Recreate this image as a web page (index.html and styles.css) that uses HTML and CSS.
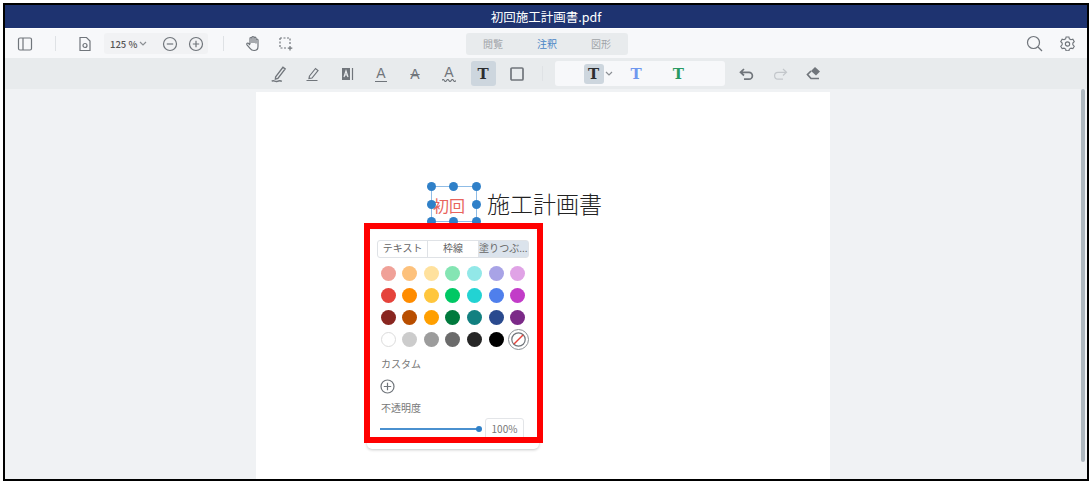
FILE: index.html
```html
<!DOCTYPE html>
<html lang="ja">
<head>
    <meta charset="UTF-8">
    <title>初回施工計画書.pdf</title>
    <link rel="stylesheet" href="styles.css">
</head>
<body>

<div class="frame">
    <div class="title-bar">初回施工計画書.pdf</div>

    <div class="main-bar">
        <button class="icon-btn first">
            <svg width="16" height="16" viewBox="0 0 16 16"><rect x="1.5" y="2" width="13" height="12" rx="1.5"/><path d="M6 2v12"/></svg>
        </button>
        <span class="bar-line line-a"></span>
        <button class="icon-btn doc-btn">
            <svg width="14" height="16" viewBox="0 0 14 16"><path d="M2 1.5h6.5l3.5 3.5v9.5H2z"/><circle cx="7" cy="9.5" r="2"/></svg>
        </button>
        <div class="zoom-group">
            <span class="zoom-val">125 %</span>
            <svg class="chev" width="8" height="5" viewBox="0 0 8 5"><path d="M1 1l3 3 3-3"/></svg>
            <svg class="zoom-out" width="16" height="16" viewBox="0 0 16 16"><circle cx="8" cy="8" r="6.5"/><path d="M4.8 8h6.4"/></svg>
            <svg class="zoom-in" width="16" height="16" viewBox="0 0 16 16"><circle cx="8" cy="8" r="6.5"/><path d="M4.8 8h6.4M8 4.8v6.4"/></svg>
        </div>
        <span class="bar-line line-b"></span>
        <button class="icon-btn hand-btn">
            <svg width="16" height="17" viewBox="0 0 16 17"><path d="M5 9V3.5a1 1 0 0 1 2 0V8M7 8V2.5a1 1 0 0 1 2 0V8M9 8V3.2a1 1 0 0 1 2 0V8.500M11 8V5a1 1 0 0 1 2 0v6.500c0 2.500-1.800 4-4 4-2 0-3-.8-4-2.200L2 9.800c-.9-1.300.8-2.300 1.700-1.300L5 10"/></svg>
        </button>
        <button class="icon-btn crop-btn">
            <svg width="14" height="14" viewBox="0 0 14 14"><path stroke-dasharray="2 1.500" d="M1 1h10v6.500M1 1v10h6.500"/><path d="M11 9v4.500M8.800 11.200h4.500"/></svg>
        </button>
        <div class="mode-tabs">
            <span>閲覧</span>
            <span class="mode-on">注釈</span>
            <span>図形</span>
        </div>
        <button class="icon-btn search-btn">
            <svg width="17" height="17" viewBox="0 0 17 17"><circle cx="7.500" cy="7.500" r="6"/><path d="M12 12l4 4"/></svg>
        </button>
        <button class="icon-btn gear-btn">
            <svg width="15" height="15" viewBox="0 0 16 16"><path d="M6.500 1h3l.5 2 1.700 1 2-.6 1.500 2.600-1.500 1.500v1.900l1.500 1.500-1.500 2.600-2-.6-1.700 1-.5 2h-3l-.5-2-1.700-1-2 .6L.8 10.900l1.500-1.500V7.500L.8 6l1.500-2.600 2 .6 1.700-1z"/><circle cx="8" cy="8.500" r="2.300"/></svg>
        </button>
    </div>

    <div class="tool-bar">
        <button class="tool">
            <svg width="18" height="18" viewBox="0 0 16 16"><path d="M5 10.500l6.500-8.500 2 1.500L7 12l-2.200.6zM1.500 14.500c2-1.500 3 .8 5 0 1.500-.6 3-.6 4 0"/></svg>
        </button>
        <button class="tool">
            <svg width="16" height="16" viewBox="0 0 16 16"><path d="M4.500 10l6-7.500 2.500 2L7 12l-3 .6zM1.500 14.500h11"/></svg>
        </button>
        <button class="tool">
            <svg width="13" height="14" viewBox="0 0 13 14"><rect class="solid" x="1" y="1" width="8" height="12"/><path class="cut" d="M3 10l2-6 2 6M3.800 8h2.400"/><path d="M11.500 1v12"/></svg>
        </button>
        <button class="tool"><span class="glyph-a under">A</span></button>
        <button class="tool"><span class="glyph-a strike">A</span></button>
        <button class="tool wave-tool">
            <span class="glyph-a">A</span>
            <svg width="14" height="3" viewBox="0 0 14 3"><path d="M0 1.500q1.200-2 2.300 0t2.300 0 2.300 0 2.300 0 2.300 0 2.300 0"/></svg>
        </button>
        <button class="tool tool-on"><span class="glyph-t">T</span></button>
        <button class="tool">
            <svg width="14" height="14" viewBox="0 0 14 14"><rect x="1" y="1" width="12" height="12" rx="1" class="thick"/></svg>
        </button>
        <span class="bar-line line-c"></span>
        <div class="style-group">
            <span class="style-t style-on"><span class="glyph-t">T</span></span>
            <svg class="chev" width="8" height="5" viewBox="0 0 8 5"><path d="M1 1l3 3 3-3"/></svg>
            <span class="glyph-t blue-t">T</span>
            <span class="glyph-t green-t">T</span>
        </div>
        <button class="tool undo-btn">
            <svg width="15" height="12" viewBox="0 0 15 12"><path d="M5 1L1.500 4.300 5 7.500M1.500 4.300H10a3.400 3.400 0 0 1 0 6.800H5" class="thick"/></svg>
        </button>
        <button class="tool redo-btn">
            <svg width="15" height="12" viewBox="0 0 15 12"><path d="M10 1l3.500 3.300L10 7.500M13.500 4.300H5a3.400 3.400 0 0 0 0 6.800h5"/></svg>
        </button>
        <button class="tool">
            <svg width="16" height="15" viewBox="0 0 16 15"><path class="solid" d="M9 1l5 4.500-4 4-5-4.500z"/><path class="thick" d="M5 5L1.500 8.500 5 12.500h8"/></svg>
        </button>
    </div>

    <div class="viewer">
        <div class="pdf-page">
            <div class="doc-line">
                <div class="sel-box">
                    初回
                    <i class="dot d1"></i><i class="dot d2"></i><i class="dot d3"></i>
                    <i class="dot d4"></i><i class="dot d5"></i>
                    <i class="dot d6"></i><i class="dot d7"></i><i class="dot d8"></i>
                </div>
                <span class="doc-text">施工計画書</span>
            </div>

            <div class="color-pop">
                <div class="pop-tabs">
                    <span>テキスト</span>
                    <span>枠線</span>
                    <span class="pop-on">塗りつぶ...</span>
                </div>
                <div class="swatches">
                    <i class="sw" style="background:#f0a198"></i>
                    <i class="sw" style="background:#fdc17c"></i>
                    <i class="sw" style="background:#ffe19d"></i>
                    <i class="sw" style="background:#84e5b3"></i>
                    <i class="sw" style="background:#92e8e8"></i>
                    <i class="sw" style="background:#a8a3e6"></i>
                    <i class="sw" style="background:#e0a3e6"></i>
                    <i class="sw" style="background:#e5433b"></i>
                    <i class="sw" style="background:#ff8c00"></i>
                    <i class="sw" style="background:#ffc63d"></i>
                    <i class="sw" style="background:#00c864"></i>
                    <i class="sw" style="background:#22d3d3"></i>
                    <i class="sw" style="background:#4f7fec"></i>
                    <i class="sw" style="background:#c23cc8"></i>
                    <i class="sw" style="background:#892620"></i>
                    <i class="sw" style="background:#b84e00"></i>
                    <i class="sw" style="background:#ff9f00"></i>
                    <i class="sw" style="background:#007a3d"></i>
                    <i class="sw" style="background:#128080"></i>
                    <i class="sw" style="background:#2a4a8e"></i>
                    <i class="sw" style="background:#7b2a88"></i>
                    <i class="sw sw-white"></i>
                    <i class="sw" style="background:#cccccc"></i>
                    <i class="sw" style="background:#9c9c9c"></i>
                    <i class="sw" style="background:#6b6b6b"></i>
                    <i class="sw" style="background:#262626"></i>
                    <i class="sw" style="background:#000000"></i>
                    <svg class="sw-none" width="21" height="21" viewBox="0 0 21 21">
                        <circle cx="10.500" cy="10.500" r="10" class="ring"/>
                        <circle cx="10.500" cy="10.500" r="6.700" class="ring2"/>
                        <path d="M6 15L15 6" class="slash"/>
                    </svg>
                </div>
                <p class="pop-label custom-label">カスタム</p>
                <svg class="add-color" width="15" height="15" viewBox="0 0 15 15"><circle cx="7.500" cy="7.500" r="6.500"/><path d="M3.800 7.500h7.400M7.500 3.800v7.400"/></svg>
                <p class="pop-label alpha-label">不透明度</p>
                <div class="alpha-row">
                    <div class="alpha-track"><i class="alpha-knob"></i></div>
                    <span class="alpha-val">100%</span>
                </div>
            </div>

            <div class="red-box"></div>
        </div>
        <div class="scroll-thumb"></div>
    </div>
</div>

</body>
</html>
```

FILE: styles.css
```css
* { box-sizing: border-box; }

html, body {
    margin: 0;
    height: 100%;
    background-color: #ffffff;
    overflow: hidden;
}
body {
    padding: 3px 3px 2px 3px;
    font-family: "Noto Sans CJK JP", "Noto Sans", sans-serif;
    color: #666;
}
button {
    background: none;
    border: none;
    padding: 0;
}
svg {
    fill: none;
    stroke: #70757b;
    stroke-width: 1.2;
    display: block;
}
svg .thick { stroke-width: 1.700; }
svg .solid { fill: #70757b; stroke: none; }
svg .cut { stroke: #e8ebed; }

.frame {
    width: 1086px;
    height: 478px;
    border: 2px solid #000;
    display: flex;
    flex-direction: column;
    overflow: hidden;
}

.title-bar {
    height: 23px;
    background-color: #1e3370;
    color: #fff;
    font-size: 12.500px;
    line-height: 23px;
    text-align: center;
    flex: none;
}

/* first toolbar */
.main-bar {
    height: 29px;
    margin-top: 1px;
    background-color: #f7f8fa;
    display: flex;
    align-items: center;
    flex: none;
}
.icon-btn {
    display: flex;
    align-items: center;
    justify-content: center;
    width: 20px;
    height: 20px;
    flex: none;
}
.first { margin-left: 10px; }
.bar-line {
    width: 1px;
    height: 15px;
    background-color: #dfe2e5;
    flex: none;
}
.line-a { margin-left: 20px; }
.doc-btn { margin-left: 19px; }
.zoom-group {
    margin-left: 9px;
    width: 104px;
    height: 21px;
    background-color: #f1f2f4;
    border-radius: 3px;
    display: flex;
    align-items: center;
    padding-left: 6px;
    flex: none;
}
.zoom-val {
    font-size: 9.500px;
    font-weight: 500;
    color: #555;
    width: 28px;
    white-space: nowrap;
}
.chev { margin-left: 1px; stroke: #8b8f94; }
.zoom-out { margin-left: 15px; }
.zoom-in { margin-left: 10px; }
.line-b { margin-left: 15px; }
.hand-btn { margin-left: 19px; }
.crop-btn { margin-left: 13px; }
.mode-tabs {
    margin-left: 170px;
    width: 162px;
    height: 22px;
    background-color: #e8ebed;
    border-radius: 3px;
    display: flex;
    align-items: center;
    font-size: 10px;
    color: #a0a4a8;
    flex: none;
}
.mode-tabs span {
    width: 54px;
    text-align: center;
}
.mode-on { color: #4a86c5; }
.search-btn { margin-left: 396px; }
.gear-btn { margin-left: 13px; }

/* second toolbar */
.tool-bar {
    height: 31px;
    background-color: #e8ebed;
    display: flex;
    align-items: center;
    padding-left: 261.500px;
    gap: 9px;
    flex: none;
}
.tool {
    width: 25px;
    height: 25px;
    border-radius: 3px;
    display: flex;
    flex-direction: column;
    align-items: center;
    justify-content: center;
    flex: none;
}
.tool-on { background-color: #cdd6de; }
.glyph-a {
    font-family: "Liberation Sans", sans-serif;
    font-size: 14px;
    line-height: 14px;
    color: #70757b;
}
.under { border-bottom: 1.500px solid #70757b; padding: 0 1px 1px; }
.strike { text-decoration: line-through; }
.wave-tool .glyph-a { line-height: 12px; }
.wave-tool svg { margin-top: 1px; }
.glyph-t {
    font-family: "DejaVu Serif", serif;
    font-weight: 700;
    font-size: 15px;
    line-height: 18px;
    color: #2b2d30;
}
.line-c { margin-left: 3px; }
.style-group {
    margin-left: 3px;
    width: 170px;
    height: 25px;
    background-color: #f7f8fa;
    border-radius: 3px;
    display: flex;
    align-items: center;
    padding-left: 29px;
    flex: none;
}
.style-t {
    width: 20px;
    height: 20px;
    display: flex;
    align-items: center;
    justify-content: center;
    border-radius: 3px;
}
.style-on { background-color: #cdd6de; }
.blue-t { color: #6f97ee; margin-left: 18px; }
.green-t { color: #2a9a62; margin-left: 31px; }
.redo-btn svg { stroke: #c3c7cb; }

/* document area */
.viewer {
    flex: 1;
    background-color: #f0f2f4;
    position: relative;
    padding-top: 3px;
}
.pdf-page {
    position: relative;
    margin-left: 251px;
    width: 574px;
    height: 400px;
    background-color: #fff;
}
.doc-line {
    display: flex;
    align-items: center;
    padding: 94px 0 0 175px;
}
.sel-box {
    position: relative;
    width: 46px;
    height: 36px;
    border: 1px solid #8fbce6;
    padding-left: 1px;
    font-size: 16px;
    line-height: 36px;
    color: #e8635c;
    white-space: nowrap;
}
.dot {
    position: absolute;
    width: 9px;
    height: 9px;
    border-radius: 50%;
    background-color: #2f80c8;
}
.d1 { left: -5px; top: -5px; }
.d2 { left: 17px; top: -5px; }
.d3 { right: -5px; top: -5px; }
.d4 { left: -5px; top: 13px; }
.d5 { right: -5px; top: 13px; }
.d6 { left: -5px; bottom: -5px; }
.d7 { left: 17px; bottom: -5px; }
.d8 { right: -5px; bottom: -5px; }
.doc-text {
    margin-left: 10px;
    font-size: 23px;
    font-weight: 300;
    color: #222;
    line-height: 36px;
    margin-top: -2px;
}

/* colour popup */
.color-pop {
    position: absolute;
    left: 111px;
    top: 138px;
    width: 172px;
    height: 219px;
    background-color: #fff;
    border-radius: 5px;
    box-shadow: 0 1px 3px rgba(0,0,0,0.22);
    padding: 10px 10px 0;
}
.pop-tabs {
    display: flex;
    height: 18px;
    border: 1px solid #dfe2e6;
    border-radius: 3px;
    font-size: 10px;
    line-height: 14px;
    text-align: center;
    color: #666;
}
.pop-tabs span {
    flex: 1;
    white-space: nowrap;
    overflow: hidden;
}
.pop-tabs span + span { border-left: 1px solid #dfe2e6; }
.pop-on { background-color: #dbe3ec; }
.swatches {
    position: relative;
    display: grid;
    grid-template-columns: repeat(7, 15px);
    column-gap: 6.670px;
    row-gap: 6.900px;
    margin: 8px 0 0 3.500px;
}
.sw {
    width: 15px;
    height: 15px;
    border-radius: 50%;
    display: block;
}
.sw-white { background: #fff; border: 1px solid #dcdcdc; }
.sw-none {
    position: absolute;
    right: 0;
    bottom: -3px;
}
.sw-none .ring { stroke: #8a8f94; stroke-width: 1; }
.sw-none .ring2 { stroke: #70757b; stroke-width: 1.200; }
.sw-none .slash { stroke: #e5433b; stroke-width: 1.500; }
.pop-label {
    margin: 0;
    font-size: 10px;
    line-height: 14px;
    color: #777;
}
.custom-label { margin: 10px 0 0 4px; }
.add-color { margin: 8px 0 0 3px; stroke: #70757b; }
.alpha-label { margin: 7px 0 0 4px; }
.alpha-row {
    display: flex;
    align-items: center;
    margin: 3px 0 0 3px;
}
.alpha-track {
    position: relative;
    width: 99px;
    height: 2px;
    background-color: #4a90cf;
}
.alpha-knob {
    position: absolute;
    right: -3px;
    top: -2px;
    width: 6px;
    height: 6px;
    border-radius: 50%;
    background-color: #2f80c8;
}
.alpha-val {
    margin-left: 6px;
    width: 39px;
    height: 22px;
    border: 1px solid #e3e5e8;
    border-radius: 3px;
    font-size: 10px;
    line-height: 19px;
    text-align: center;
    color: #777;
}

/* annotation on top of the screenshot */
.red-box {
    position: absolute;
    left: 108px;
    top: 131px;
    width: 179px;
    height: 220px;
    border: 6px solid #ff0000;
}

.scroll-thumb {
    position: absolute;
    right: 2px;
    top: 0;
    width: 4px;
    height: 373px;
    border-radius: 2px;
    background-color: #aeb8c0;
}
```
